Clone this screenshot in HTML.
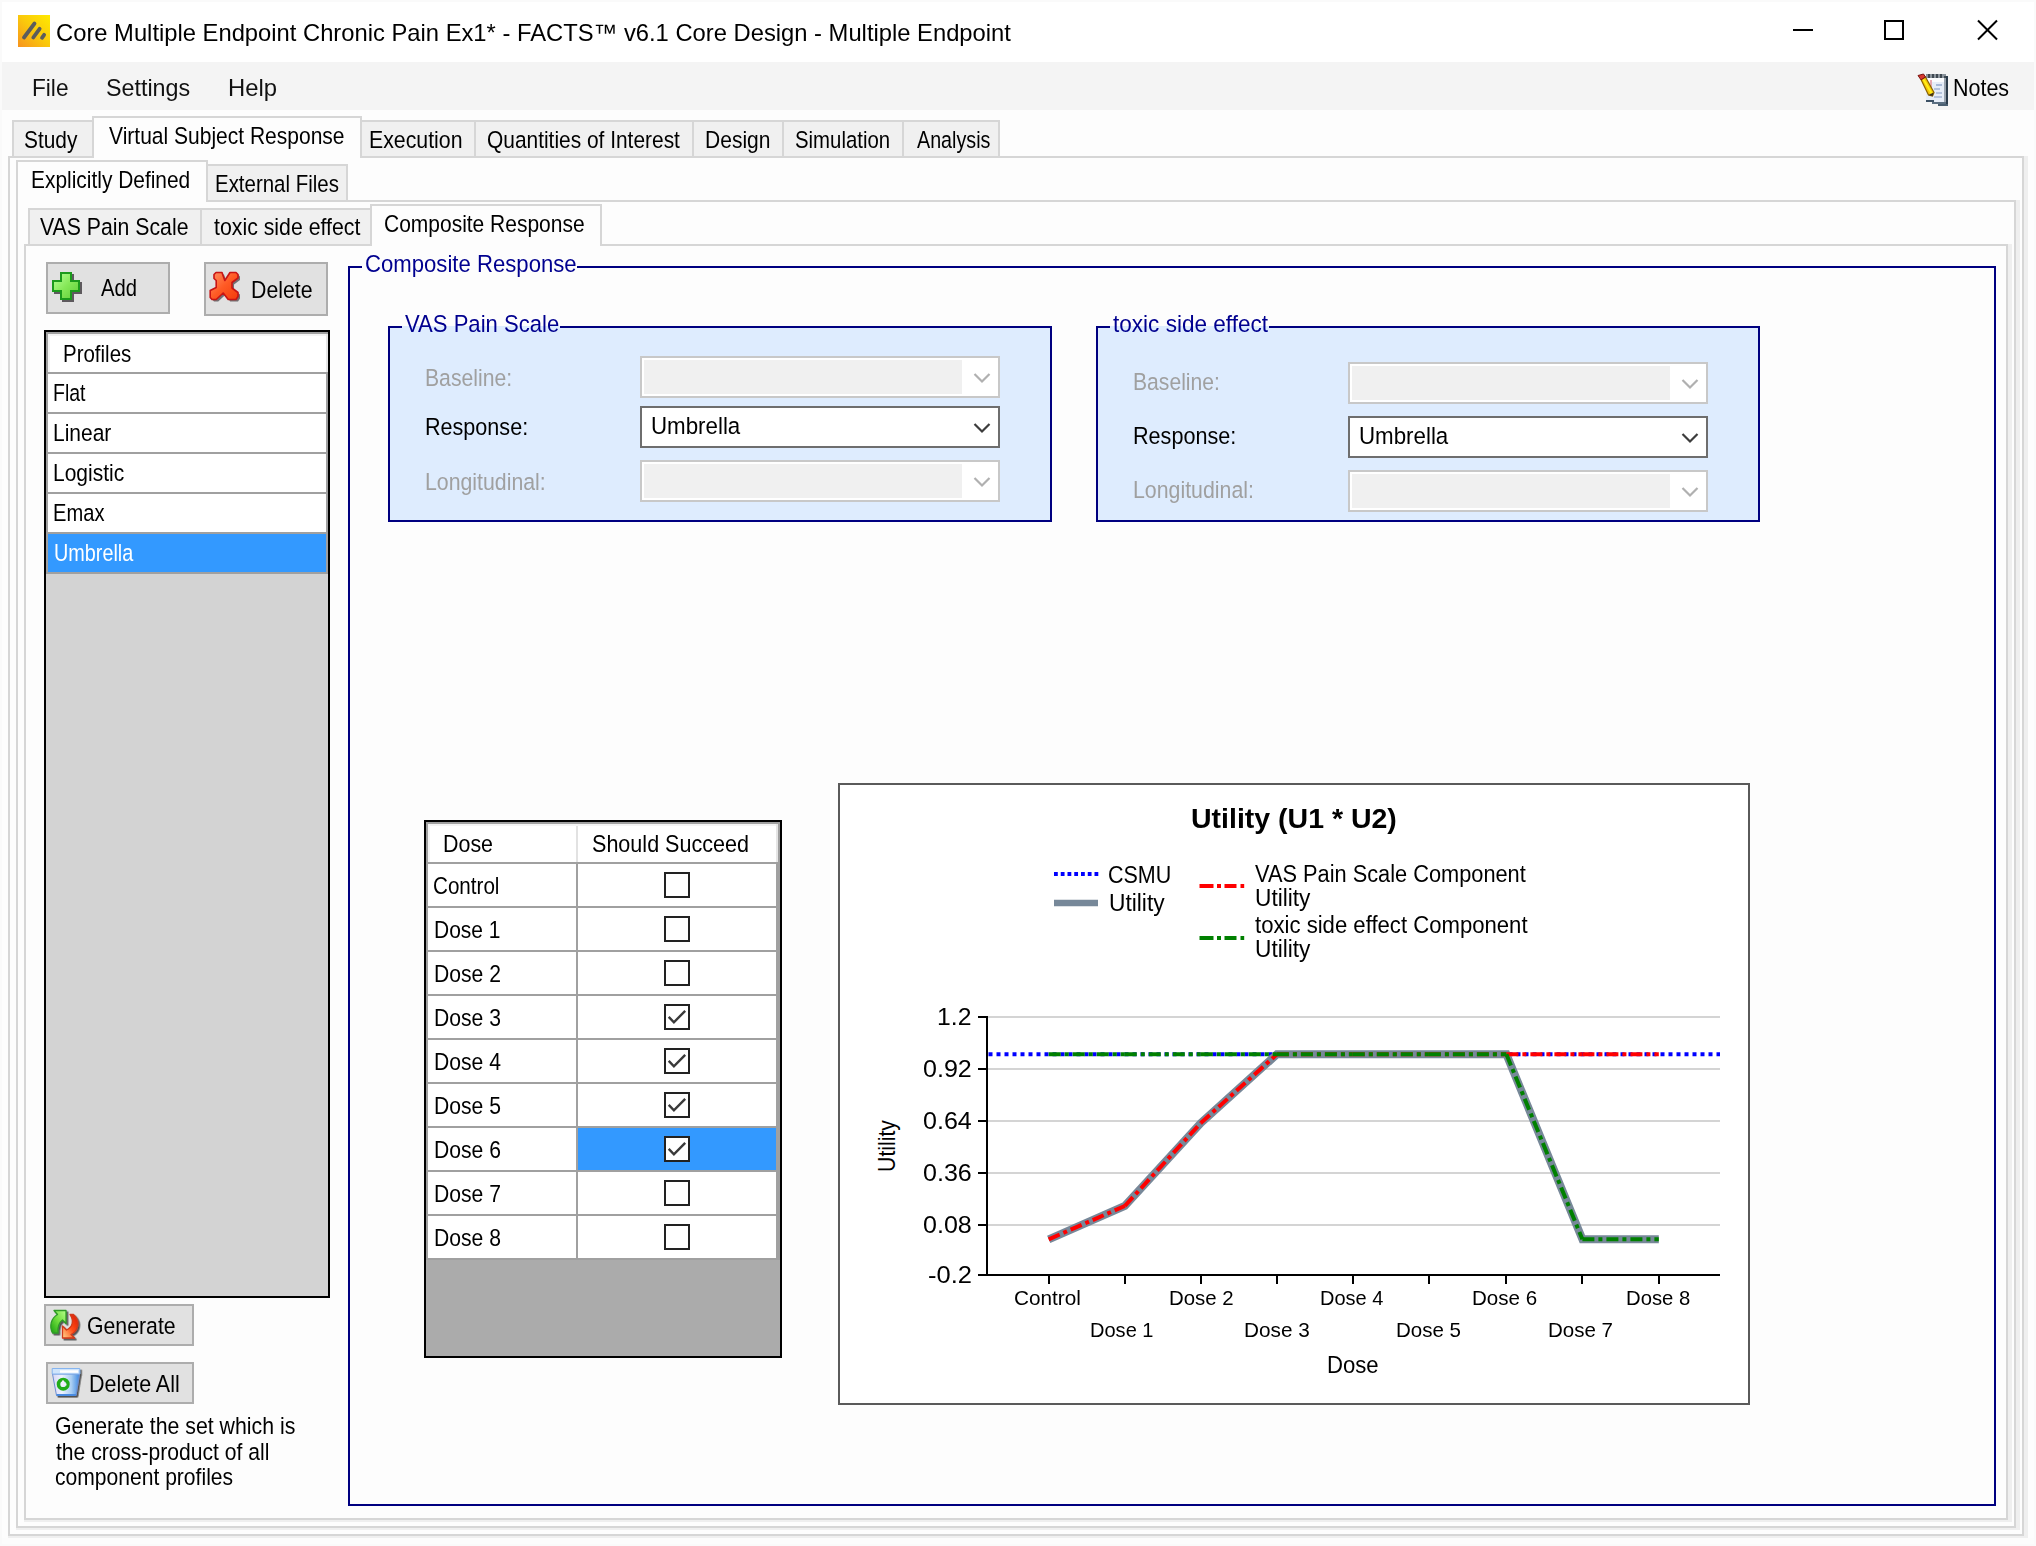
<!DOCTYPE html>
<html><head><meta charset="utf-8"><title>FACTS Core Design</title><style>
html,body{margin:0;padding:0;}
body{width:2036px;height:1546px;position:relative;overflow:hidden;background:#fff;font-family:"Liberation Sans", sans-serif;}
.b{position:absolute;box-sizing:border-box;}
.t{position:absolute;white-space:nowrap;transform-origin:0 0;display:block;}
svg.ov{position:absolute;left:0;top:0;}
</style></head>
<body>
<div class="b" style="left:0px;top:0px;width:2036px;height:2px;background:#fafafa;"></div>
<div class="b" style="left:0px;top:0px;width:2px;height:1546px;background:#fafafa;"></div>
<div class="b" style="left:2034px;top:0px;width:2px;height:1546px;background:#fafafa;"></div>
<div class="b" style="left:0px;top:1544px;width:2036px;height:2px;background:#fafafa;"></div>
<div class="b" style="left:2px;top:1538px;width:2032px;height:6px;background:#fcfcfc;"></div>
<div class="b" style="left:2px;top:62px;width:2032px;height:48px;background:#f4f4f4;"></div>
<div class="b" style="left:2px;top:110px;width:2032px;height:1428px;background:#fdfdfd;"></div>
<div class="b" style="left:2024px;top:156px;width:4px;height:1382px;background:#efefef;"></div>
<div class="b" style="left:8px;top:1536px;width:2020px;height:2px;background:#efefef;"></div>
<div class="b" style="left:8px;top:156px;width:2016px;height:1380px;background:#fdfdfd;border:2px solid #d6d6d6;"></div>
<div class="b" style="left:12px;top:120px;width:80px;height:36px;background:#f0f0f0;border-top:2px solid #d6d6d6;border-left:2px solid #d6d6d6;"></div>
<div class="b" style="left:362px;top:120px;width:114px;height:36px;background:#f0f0f0;border-top:2px solid #d6d6d6;border-right:2px solid #d6d6d6;"></div>
<div class="b" style="left:476px;top:120px;width:218px;height:36px;background:#f0f0f0;border-top:2px solid #d6d6d6;border-right:2px solid #d6d6d6;"></div>
<div class="b" style="left:694px;top:120px;width:90px;height:36px;background:#f0f0f0;border-top:2px solid #d6d6d6;border-right:2px solid #d6d6d6;"></div>
<div class="b" style="left:784px;top:120px;width:120px;height:36px;background:#f0f0f0;border-top:2px solid #d6d6d6;border-right:2px solid #d6d6d6;"></div>
<div class="b" style="left:904px;top:120px;width:96px;height:36px;background:#f0f0f0;border-top:2px solid #d6d6d6;border-right:2px solid #d6d6d6;"></div>
<div class="b" style="left:92px;top:116px;width:270px;height:42px;background:#fdfdfd;border-top:2px solid #d6d6d6;border-left:2px solid #d6d6d6;border-right:2px solid #d6d6d6;"></div>
<div class="b" style="left:2016px;top:200px;width:4px;height:1330px;background:#efefef;"></div>
<div class="b" style="left:16px;top:1528px;width:2004px;height:2px;background:#efefef;"></div>
<div class="b" style="left:16px;top:200px;width:2000px;height:1328px;background:#fdfdfd;border:2px solid #d6d6d6;"></div>
<div class="b" style="left:208px;top:164px;width:140px;height:36px;background:#f0f0f0;border-top:2px solid #d6d6d6;border-right:2px solid #d6d6d6;"></div>
<div class="b" style="left:16px;top:160px;width:192px;height:42px;background:#fdfdfd;border-top:2px solid #d6d6d6;border-left:2px solid #d6d6d6;border-right:2px solid #d6d6d6;"></div>
<div class="b" style="left:2008px;top:244px;width:4px;height:1278px;background:#efefef;"></div>
<div class="b" style="left:24px;top:1520px;width:1988px;height:2px;background:#efefef;"></div>
<div class="b" style="left:24px;top:244px;width:1984px;height:1276px;background:#fdfdfd;border:2px solid #d6d6d6;"></div>
<div class="b" style="left:28px;top:208px;width:174px;height:36px;background:#f0f0f0;border-top:2px solid #d6d6d6;border-left:2px solid #d6d6d6;border-right:2px solid #d6d6d6;"></div>
<div class="b" style="left:202px;top:208px;width:168px;height:36px;background:#f0f0f0;border-top:2px solid #d6d6d6;"></div>
<div class="b" style="left:370px;top:204px;width:232px;height:42px;background:#fdfdfd;border-top:2px solid #d6d6d6;border-left:2px solid #d6d6d6;border-right:2px solid #d6d6d6;"></div>
<div class="b" style="left:46px;top:262px;width:124px;height:52px;background:#e1e1e1;border:2px solid #adadad;"></div>
<div class="b" style="left:204px;top:262px;width:124px;height:54px;background:#e1e1e1;border:2px solid #adadad;"></div>
<div class="b" style="left:44px;top:330px;width:286px;height:968px;background:#d3d3d3;border:2px solid #000;"></div>
<div class="b" style="left:46px;top:332px;width:282px;height:2px;background:#a0a0a0;"></div>
<div class="b" style="left:46px;top:332px;width:2px;height:242px;background:#a0a0a0;"></div>
<div class="b" style="left:48px;top:334px;width:278px;height:38px;background:#fff;border-top:2px solid #f3f3f3;border-left:2px solid #f3f3f3;"></div>
<div class="b" style="left:326px;top:334px;width:2px;height:38px;background:#e5e5e5;"></div>
<div class="b" style="left:326px;top:372px;width:2px;height:202px;background:#a0a0a0;"></div>
<div class="b" style="left:48px;top:372px;width:278px;height:2px;background:#a0a0a0;"></div>
<div class="b" style="left:48px;top:374px;width:278px;height:38px;background:#fff;"></div>
<div class="b" style="left:48px;top:412px;width:278px;height:2px;background:#a0a0a0;"></div>
<div class="b" style="left:48px;top:414px;width:278px;height:38px;background:#fff;"></div>
<div class="b" style="left:48px;top:452px;width:278px;height:2px;background:#a0a0a0;"></div>
<div class="b" style="left:48px;top:454px;width:278px;height:38px;background:#fff;"></div>
<div class="b" style="left:48px;top:492px;width:278px;height:2px;background:#a0a0a0;"></div>
<div class="b" style="left:48px;top:494px;width:278px;height:38px;background:#fff;"></div>
<div class="b" style="left:48px;top:532px;width:278px;height:2px;background:#a0a0a0;"></div>
<div class="b" style="left:48px;top:534px;width:278px;height:38px;background:#3399ff;"></div>
<div class="b" style="left:48px;top:572px;width:278px;height:2px;background:#a0a0a0;"></div>
<div class="b" style="left:44px;top:1304px;width:150px;height:42px;background:#e1e1e1;border:2px solid #adadad;"></div>
<div class="b" style="left:46px;top:1362px;width:148px;height:42px;background:#e1e1e1;border:2px solid #adadad;"></div>
<div class="b" style="left:348px;top:266px;width:13.600000000000023px;height:2px;background:#000080;"></div>
<div class="b" style="left:577px;top:266px;width:1419px;height:2px;background:#000080;"></div>
<div class="b" style="left:348px;top:266px;width:2px;height:1240px;background:#000080;"></div>
<div class="b" style="left:1994px;top:266px;width:2px;height:1240px;background:#000080;"></div>
<div class="b" style="left:348px;top:1504px;width:1648px;height:2px;background:#000080;"></div>
<div class="b" style="left:388px;top:326px;width:664px;height:196px;background:#deecfe;"></div>
<div class="b" style="left:388px;top:326px;width:13.600000000000023px;height:2px;background:#000080;"></div>
<div class="b" style="left:560px;top:326px;width:492px;height:2px;background:#000080;"></div>
<div class="b" style="left:388px;top:326px;width:2px;height:196px;background:#000080;"></div>
<div class="b" style="left:1050px;top:326px;width:2px;height:196px;background:#000080;"></div>
<div class="b" style="left:388px;top:520px;width:664px;height:2px;background:#000080;"></div>
<div class="b" style="left:1096px;top:326px;width:664px;height:196px;background:#deecfe;"></div>
<div class="b" style="left:1096px;top:326px;width:13.5px;height:2px;background:#000080;"></div>
<div class="b" style="left:1269px;top:326px;width:491px;height:2px;background:#000080;"></div>
<div class="b" style="left:1096px;top:326px;width:2px;height:196px;background:#000080;"></div>
<div class="b" style="left:1758px;top:326px;width:2px;height:196px;background:#000080;"></div>
<div class="b" style="left:1096px;top:520px;width:664px;height:2px;background:#000080;"></div>
<div class="b" style="left:640px;top:356px;width:360px;height:42px;background:#fff;border:2px solid #c8c8c8;"></div>
<div class="b" style="left:644px;top:360px;width:318px;height:34px;background:#f0f0f0;"></div>
<div class="b" style="left:640px;top:406px;width:360px;height:42px;background:#fff;border:2px solid #6e6e6e;"></div>
<div class="b" style="left:640px;top:460px;width:360px;height:42px;background:#fff;border:2px solid #c8c8c8;"></div>
<div class="b" style="left:644px;top:464px;width:318px;height:34px;background:#f0f0f0;"></div>
<div class="b" style="left:1348px;top:362px;width:360px;height:42px;background:#fff;border:2px solid #c8c8c8;"></div>
<div class="b" style="left:1352px;top:366px;width:318px;height:34px;background:#f0f0f0;"></div>
<div class="b" style="left:1348px;top:416px;width:360px;height:42px;background:#fff;border:2px solid #6e6e6e;"></div>
<div class="b" style="left:1348px;top:470px;width:360px;height:42px;background:#fff;border:2px solid #c8c8c8;"></div>
<div class="b" style="left:1352px;top:474px;width:318px;height:34px;background:#f0f0f0;"></div>
<div class="b" style="left:424px;top:820px;width:358px;height:538px;background:#ababab;border:2px solid #000;"></div>
<div class="b" style="left:426px;top:822px;width:354px;height:2px;background:#a0a0a0;"></div>
<div class="b" style="left:426px;top:822px;width:2px;height:438px;background:#a0a0a0;"></div>
<div class="b" style="left:778px;top:822px;width:2px;height:438px;background:#a0a0a0;"></div>
<div class="b" style="left:428px;top:824px;width:348px;height:38px;background:#fff;border-top:2px solid #f3f3f3;border-left:2px solid #f3f3f3;"></div>
<div class="b" style="left:576px;top:826px;width:2px;height:36px;background:#e2e2e2;"></div>
<div class="b" style="left:776px;top:824px;width:2px;height:38px;background:#e5e5e5;"></div>
<div class="b" style="left:428px;top:862px;width:350px;height:2px;background:#a0a0a0;"></div>
<div class="b" style="left:428px;top:864px;width:148px;height:42px;background:#fff;"></div>
<div class="b" style="left:578px;top:864px;width:198px;height:42px;background:#fff;"></div>
<div class="b" style="left:428px;top:906px;width:350px;height:2px;background:#a0a0a0;"></div>
<div class="b" style="left:664px;top:872px;width:26px;height:26px;background:#fff;border:2px solid #222;"></div>
<div class="b" style="left:428px;top:908px;width:148px;height:42px;background:#fff;"></div>
<div class="b" style="left:578px;top:908px;width:198px;height:42px;background:#fff;"></div>
<div class="b" style="left:428px;top:950px;width:350px;height:2px;background:#a0a0a0;"></div>
<div class="b" style="left:664px;top:916px;width:26px;height:26px;background:#fff;border:2px solid #222;"></div>
<div class="b" style="left:428px;top:952px;width:148px;height:42px;background:#fff;"></div>
<div class="b" style="left:578px;top:952px;width:198px;height:42px;background:#fff;"></div>
<div class="b" style="left:428px;top:994px;width:350px;height:2px;background:#a0a0a0;"></div>
<div class="b" style="left:664px;top:960px;width:26px;height:26px;background:#fff;border:2px solid #222;"></div>
<div class="b" style="left:428px;top:996px;width:148px;height:42px;background:#fff;"></div>
<div class="b" style="left:578px;top:996px;width:198px;height:42px;background:#fff;"></div>
<div class="b" style="left:428px;top:1038px;width:350px;height:2px;background:#a0a0a0;"></div>
<div class="b" style="left:664px;top:1004px;width:26px;height:26px;background:#fff;border:2px solid #222;"></div>
<div class="b" style="left:428px;top:1040px;width:148px;height:42px;background:#fff;"></div>
<div class="b" style="left:578px;top:1040px;width:198px;height:42px;background:#fff;"></div>
<div class="b" style="left:428px;top:1082px;width:350px;height:2px;background:#a0a0a0;"></div>
<div class="b" style="left:664px;top:1048px;width:26px;height:26px;background:#fff;border:2px solid #222;"></div>
<div class="b" style="left:428px;top:1084px;width:148px;height:42px;background:#fff;"></div>
<div class="b" style="left:578px;top:1084px;width:198px;height:42px;background:#fff;"></div>
<div class="b" style="left:428px;top:1126px;width:350px;height:2px;background:#a0a0a0;"></div>
<div class="b" style="left:664px;top:1092px;width:26px;height:26px;background:#fff;border:2px solid #222;"></div>
<div class="b" style="left:428px;top:1128px;width:148px;height:42px;background:#fff;"></div>
<div class="b" style="left:578px;top:1128px;width:198px;height:42px;background:#3399ff;"></div>
<div class="b" style="left:428px;top:1170px;width:350px;height:2px;background:#a0a0a0;"></div>
<div class="b" style="left:664px;top:1136px;width:26px;height:26px;background:#fff;border:2px solid #222;"></div>
<div class="b" style="left:428px;top:1172px;width:148px;height:42px;background:#fff;"></div>
<div class="b" style="left:578px;top:1172px;width:198px;height:42px;background:#fff;"></div>
<div class="b" style="left:428px;top:1214px;width:350px;height:2px;background:#a0a0a0;"></div>
<div class="b" style="left:664px;top:1180px;width:26px;height:26px;background:#fff;border:2px solid #222;"></div>
<div class="b" style="left:428px;top:1216px;width:148px;height:42px;background:#fff;"></div>
<div class="b" style="left:578px;top:1216px;width:198px;height:42px;background:#fff;"></div>
<div class="b" style="left:428px;top:1258px;width:350px;height:2px;background:#a0a0a0;"></div>
<div class="b" style="left:664px;top:1224px;width:26px;height:26px;background:#fff;border:2px solid #222;"></div>
<div class="b" style="left:576px;top:864px;width:2px;height:396px;background:#a0a0a0;"></div>
<div class="b" style="left:776px;top:864px;width:2px;height:396px;background:#a0a0a0;"></div>
<div class="b" style="left:838px;top:783px;width:912px;height:622px;background:#fff;border:2px solid #5a5a5a;"></div>
<svg class="ov" width="2036" height="1546" viewBox="0 0 2036 1546">
<defs><linearGradient id="ig" x1="1" y1="0" x2="0" y2="1"><stop offset="0" stop-color="#ffea00"/><stop offset="0.5" stop-color="#fac80c"/><stop offset="1" stop-color="#f7931e"/></linearGradient>
<filter id="ds" x="-30%" y="-30%" width="170%" height="170%"><feDropShadow dx="1.6" dy="1.6" stdDeviation="0.7" flood-color="#222" flood-opacity="0.75"/></filter></defs>
<rect x="18" y="15" width="32" height="32" fill="url(#ig)"/>
<g stroke="#5c5c5c" stroke-width="3.800" stroke-linecap="round"><line x1="24" y1="37.500" x2="34.500" y2="23.500"/><line x1="33.300" y1="37.500" x2="39.600" y2="28.800"/><line x1="42" y1="37.800" x2="44.100" y2="34.800"/></g>
<g stroke="#000" stroke-width="2" fill="none" shape-rendering="crispEdges"><line x1="1793" y1="30" x2="1813" y2="30"/><rect x="1885" y="21" width="18" height="18"/></g>
<g stroke="#000" stroke-width="2" fill="none"><line x1="1978" y1="20.5" x2="1997" y2="39.5"/><line x1="1997" y1="20.5" x2="1978" y2="39.5"/></g>
<g shape-rendering="crispEdges">
<rect x="1926" y="76" width="18" height="26" fill="#e6edf8"/>
<rect x="1928" y="78" width="16" height="4" fill="#fbfcfe"/>
<rect x="1926" y="74" width="20" height="4" fill="#8b949c"/>
<rect x="1928" y="74" width="2" height="4" fill="#3f4952"/><rect x="1932" y="74" width="2" height="4" fill="#3f4952"/><rect x="1936" y="74" width="2" height="4" fill="#3f4952"/><rect x="1940" y="74" width="2" height="4" fill="#3f4952"/><rect x="1944" y="76" width="2" height="2" fill="#3f4952"/>
<rect x="1944" y="78" width="2" height="26" fill="#98a2ad"/>
<rect x="1946" y="76" width="2" height="28" fill="#2b3b4b"/>
<rect x="1926" y="100" width="8" height="2" fill="#3c5064"/>
<rect x="1932" y="102" width="14" height="2" fill="#5a6e80"/>
<rect x="1938" y="104" width="10" height="2" fill="#4a5e70"/>
<rect x="1930" y="80" width="2" height="8" fill="#e8a8b0"/>
<rect x="1936" y="84" width="6" height="2" fill="#a9bad8"/><rect x="1934" y="88" width="6" height="2" fill="#b4c2dc"/><rect x="1936" y="92" width="6" height="2" fill="#b4c2dc"/><rect x="1934" y="96" width="8" height="2" fill="#b4c2dc"/>
</g>
<path d="M1921 79.500 L1925.500 77 L1934 92.500 L1932.500 96 L1928.500 95 Z" fill="#f6c80a" stroke="#8a6200" stroke-width="1.2"/>
<path d="M1923.500 79.500 L1932 94" stroke="#fff21a" stroke-width="1.6"/>
<path d="M1918 75.500 L1923.500 74 L1925.500 77 L1921 79.800 Z" fill="#d83a30" stroke="#7a1410" stroke-width="1"/>
<path d="M1928.500 95 L1932.500 96 L1933.500 92.500 Z" fill="#3a3020"/>
<defs><linearGradient id="gp" x1="0" y1="0" x2="1" y2="1"><stop offset="0" stop-color="#b4ff96"/><stop offset="0.5" stop-color="#86e858"/><stop offset="1" stop-color="#5fcf38"/></linearGradient>
<linearGradient id="rx" x1="0" y1="0" x2="1" y2="1"><stop offset="0" stop-color="#ff9266"/><stop offset="0.5" stop-color="#ff5a24"/><stop offset="1" stop-color="#f23c0c"/></linearGradient></defs>
<path d="M60 272 h12 v8 h8 v12 h-8 v8 h-12 v-8 h-8 v-12 h8 Z" fill="#5e5a5e" transform="translate(2,2)"/>
<path d="M60 272 h12 v8 h8 v12 h-8 v8 h-12 v-8 h-8 v-12 h8 Z" fill="#1c9a1c"/>
<path d="M62 274 h8 v8 h8 v8 h-8 v8 h-8 v-8 h-8 v-8 h8 Z" fill="url(#gp)"/>
<path d="M216 272.500 L222 272.500 L224.800 280.500 L230 272.500 L236 272.500 L238 274.500 L238 278 L232 282.500 L232 288 L238 292.500 L238 296.500 L236 299.500 L228.200 299.500 L223.200 293 L216.200 299.500 L212 299.500 L210.200 297.500 L210.200 290.500 L216.200 287.500 L216.200 280.500 L214 278.500 L214 274.500 Z" fill="#5e5a5e" opacity="0.85" transform="translate(2,2)"/>
<path d="M216 272.500 L222 272.500 L224.800 280.500 L230 272.500 L236 272.500 L238 274.500 L238 278 L232 282.500 L232 288 L238 292.500 L238 296.500 L236 299.500 L228.200 299.500 L223.200 293 L216.200 299.500 L212 299.500 L210.200 297.500 L210.200 290.500 L216.200 287.500 L216.200 280.500 L214 278.500 L214 274.500 Z" fill="url(#rx)" stroke="#c81414" stroke-width="1.6" stroke-linejoin="round"/>
<defs><linearGradient id="ga" x1="1" y1="0" x2="0" y2="1"><stop offset="0" stop-color="#b6ff8a"/><stop offset="0.5" stop-color="#6fdc3c"/><stop offset="1" stop-color="#18a010"/></linearGradient>
<linearGradient id="ra" x1="1" y1="0" x2="0" y2="1"><stop offset="0" stop-color="#d81808"/><stop offset="0.5" stop-color="#ff4a14"/><stop offset="1" stop-color="#ffd890"/></linearGradient></defs>
<g filter="url(#ds)">
<path d="M54 1310.500 H66 V1323.500 L62.500 1320 C59 1322.500 57.500 1327 58 1333 L52.500 1333 C49 1326 51 1318.500 57.500 1314.500 Z" fill="url(#ga)" stroke="#2f9a28" stroke-width="1.3" stroke-linejoin="round"/>
<path d="M62.500 1326 V1338 H74.500 L71 1334.500 C78 1331 81 1321.500 73.500 1314.500 L70 1314.500 C74 1320.500 73 1327 66.500 1330 Z" fill="url(#ra)" stroke="#d23a1a" stroke-width="1.3" stroke-linejoin="round"/>
</g>
<defs><linearGradient id="bin" x1="0" y1="0" x2="1" y2="0"><stop offset="0" stop-color="#d6d6f4"/><stop offset="0.35" stop-color="#eef2ff"/><stop offset="0.7" stop-color="#a8cdf2"/><stop offset="1" stop-color="#3c88e2"/></linearGradient></defs>
<g filter="url(#ds)">
<path d="M52.500 1374 L79.500 1374 L76 1395.500 L56.500 1395.500 Z" fill="url(#bin)" stroke="#6f8fd0" stroke-width="1"/>
<path d="M56.500 1394 L76 1394 L75.800 1396 L56.700 1396 Z" fill="#4a8ae0"/>
<path d="M52.200 1368.500 L79.800 1368.500 L79.800 1374 L52.200 1374 Z" fill="#cfe4fb" stroke="#86b4ee" stroke-width="1"/>
<path d="M60 1371.500 L78 1371.500" stroke="#ffffff" stroke-width="2.400"/>
</g>
<circle cx="63.200" cy="1384.200" r="4.700" fill="none" stroke="#22ac18" stroke-width="3.600"/>
<path d="M63 1380.500 L63 1384.500 L66.500 1384.500" fill="none" stroke="#f4eefc" stroke-width="2"/>
<path d="M974.5 374 L982 381.5 L989.5 374" fill="none" stroke="#b0b0b0" stroke-width="2.200"/>
<path d="M974.5 424 L982 431.5 L989.5 424" fill="none" stroke="#3c3c3c" stroke-width="2.200"/>
<path d="M974.5 478 L982 485.5 L989.5 478" fill="none" stroke="#b0b0b0" stroke-width="2.200"/>
<path d="M1682.5 380 L1690 387.5 L1697.5 380" fill="none" stroke="#b0b0b0" stroke-width="2.200"/>
<path d="M1682.5 434 L1690 441.5 L1697.5 434" fill="none" stroke="#3c3c3c" stroke-width="2.200"/>
<path d="M1682.5 488 L1690 495.5 L1697.5 488" fill="none" stroke="#b0b0b0" stroke-width="2.200"/>
<path d="M668.700 1016.9 L673.900 1022.3 L685.200 1010.8" fill="none" stroke="#3a3a3a" stroke-width="2.400"/>
<path d="M668.700 1060.9 L673.900 1066.3 L685.200 1054.8" fill="none" stroke="#3a3a3a" stroke-width="2.400"/>
<path d="M668.700 1104.9 L673.900 1110.3 L685.200 1098.8" fill="none" stroke="#3a3a3a" stroke-width="2.400"/>
<path d="M668.700 1148.9 L673.900 1154.3 L685.200 1142.8" fill="none" stroke="#3a3a3a" stroke-width="2.400"/>
<g shape-rendering="crispEdges">
<rect x="988" y="1016" width="732" height="2" fill="#d4d4d4"/>
<rect x="988" y="1068" width="732" height="2" fill="#d4d4d4"/>
<rect x="988" y="1120" width="732" height="2" fill="#d4d4d4"/>
<rect x="988" y="1172" width="732" height="2" fill="#d4d4d4"/>
<rect x="988" y="1224" width="732" height="2" fill="#d4d4d4"/>
</g>
<line x1="1054" y1="874" x2="1098.300" y2="874" stroke="#0000ff" stroke-width="4" stroke-dasharray="3.800 2.950"/>
<line x1="1054" y1="903" x2="1098" y2="903" stroke="#778899" stroke-width="6.400"/>
<line x1="1199.500" y1="886" x2="1244.200" y2="886" stroke="#ff0000" stroke-width="4" stroke-dasharray="14 3.500 4 3.500 12 4 4 4"/>
<line x1="1199.500" y1="938" x2="1244.200" y2="938" stroke="#008000" stroke-width="4" stroke-dasharray="14 3.500 4 3.500 12 4 4 4"/>
<line x1="988.500" y1="1054.3" x2="1720" y2="1054.3" stroke="#0000ff" stroke-width="4" stroke-dasharray="4 4"/>
<polyline points="1048.7,1239.3 1124.8,1206 1200.8,1123 1276.9,1054.3 1352.8,1054.3 1428.9,1054.3 1506.4,1054.3 1582.4,1239.3 1658.8,1239.3" fill="none" stroke="#778899" stroke-width="8" stroke-linejoin="miter"/>
<g stroke="#ff0000" stroke-width="4" stroke-dasharray="12 4 4 4" fill="none"><line x1="1048.7" y1="1239.3" x2="1124.8" y2="1206"/><line x1="1124.8" y1="1206" x2="1200.8" y2="1123"/><line x1="1200.8" y1="1123" x2="1276.9" y2="1054.3"/><line x1="1276.9" y1="1054.3" x2="1352.8" y2="1054.3"/><line x1="1352.8" y1="1054.3" x2="1428.9" y2="1054.3"/><line x1="1428.9" y1="1054.3" x2="1506.4" y2="1054.3"/><line x1="1506.4" y1="1054.3" x2="1582.4" y2="1054.3"/><line x1="1582.4" y1="1054.3" x2="1658.8" y2="1054.3"/></g>
<g stroke="#008000" stroke-width="4" stroke-dasharray="12 4 4 4" fill="none"><line x1="1048.7" y1="1054.3" x2="1124.8" y2="1054.3"/><line x1="1124.8" y1="1054.3" x2="1200.8" y2="1054.3"/><line x1="1200.8" y1="1054.3" x2="1276.9" y2="1054.3"/><line x1="1276.9" y1="1054.3" x2="1352.8" y2="1054.3"/><line x1="1352.8" y1="1054.3" x2="1428.9" y2="1054.3"/><line x1="1428.9" y1="1054.3" x2="1506.4" y2="1054.3"/><line x1="1506.4" y1="1054.3" x2="1582.4" y2="1239.3"/><line x1="1582.4" y1="1239.3" x2="1658.8" y2="1239.3"/></g>
<g shape-rendering="crispEdges" fill="#000">
<rect x="986" y="1016" width="2" height="260"/>
<rect x="986" y="1274" width="734" height="2"/>
<rect x="978" y="1016" width="9" height="2"/>
<rect x="978" y="1068" width="9" height="2"/>
<rect x="978" y="1120" width="9" height="2"/>
<rect x="978" y="1172" width="9" height="2"/>
<rect x="978" y="1224" width="9" height="2"/>
<rect x="978" y="1274" width="9" height="2"/>
<rect x="1048" y="1275" width="2" height="9"/>
<rect x="1124" y="1275" width="2" height="9"/>
<rect x="1200" y="1275" width="2" height="9"/>
<rect x="1276" y="1275" width="2" height="9"/>
<rect x="1352" y="1275" width="2" height="9"/>
<rect x="1428" y="1275" width="2" height="9"/>
<rect x="1505" y="1275" width="2" height="9"/>
<rect x="1581" y="1275" width="2" height="9"/>
<rect x="1658" y="1275" width="2" height="9"/>
</g>
</svg>
<span class="t" style="left:23.65px;top:127.80px;font-size:24.5px;line-height:24.5px;color:#000;transform:scaleX(0.8526);">Study</span>
<span class="t" style="left:109.10px;top:123.70px;font-size:24.5px;line-height:24.5px;color:#000;transform:scaleX(0.8576);">Virtual Subject Response</span>
<span class="t" style="left:368.76px;top:127.80px;font-size:24.5px;line-height:24.5px;color:#000;transform:scaleX(0.8688);">Execution</span>
<span class="t" style="left:486.65px;top:127.80px;font-size:24.5px;line-height:24.5px;color:#000;transform:scaleX(0.8533);">Quantities of Interest</span>
<span class="t" style="left:704.78px;top:127.80px;font-size:24.5px;line-height:24.5px;color:#000;transform:scaleX(0.8583);">Design</span>
<span class="t" style="left:795.17px;top:127.80px;font-size:24.5px;line-height:24.5px;color:#000;transform:scaleX(0.8309);">Simulation</span>
<span class="t" style="left:916.50px;top:127.80px;font-size:24.5px;line-height:24.5px;color:#000;transform:scaleX(0.8046);">Analysis</span>
<span class="t" style="left:31.19px;top:167.50px;font-size:24.5px;line-height:24.5px;color:#000;transform:scaleX(0.8536);">Explicitly Defined</span>
<span class="t" style="left:214.93px;top:171.50px;font-size:24.5px;line-height:24.5px;color:#000;transform:scaleX(0.8347);">External Files</span>
<span class="t" style="left:40.40px;top:215.30px;font-size:24.5px;line-height:24.5px;color:#000;transform:scaleX(0.8674);">VAS Pain Scale</span>
<span class="t" style="left:213.70px;top:215.30px;font-size:24.5px;line-height:24.5px;color:#000;transform:scaleX(0.8689);">toxic side effect</span>
<span class="t" style="left:384.34px;top:211.60px;font-size:24.5px;line-height:24.5px;color:#000;transform:scaleX(0.8564);">Composite Response</span>
<span class="t" style="left:55.51px;top:20.60px;font-size:24px;line-height:24px;color:#000;transform:scaleX(0.9901);">Core Multiple Endpoint Chronic Pain Ex1* - FACTS™ v6.1 Core Design - Multiple Endpoint</span>
<span class="t" style="left:31.96px;top:75.70px;font-size:24px;line-height:24px;color:#111;transform:scaleX(0.9431);">File</span>
<span class="t" style="left:105.53px;top:75.70px;font-size:24px;line-height:24px;color:#111;transform:scaleX(0.9706);">Settings</span>
<span class="t" style="left:228.01px;top:75.70px;font-size:24px;line-height:24px;color:#111;transform:scaleX(0.9935);">Help</span>
<span class="t" style="left:1953.25px;top:76.00px;font-size:24.5px;line-height:24.5px;color:#000;transform:scaleX(0.8761);">Notes</span>
<span class="t" style="left:100.90px;top:275.70px;font-size:24.5px;line-height:24.5px;color:#000;transform:scaleX(0.8262);">Add</span>
<span class="t" style="left:251.26px;top:277.50px;font-size:24.5px;line-height:24.5px;color:#000;transform:scaleX(0.8696);">Delete</span>
<span class="t" style="left:53.31px;top:381.30px;font-size:24.5px;line-height:24.5px;color:#000;transform:scaleX(0.7967);">Flat</span>
<span class="t" style="left:53.19px;top:421.30px;font-size:24.5px;line-height:24.5px;color:#000;transform:scaleX(0.8568);">Linear</span>
<span class="t" style="left:53.19px;top:461.30px;font-size:24.5px;line-height:24.5px;color:#000;transform:scaleX(0.8562);">Logistic</span>
<span class="t" style="left:53.26px;top:501.30px;font-size:24.5px;line-height:24.5px;color:#000;transform:scaleX(0.8215);">Emax</span>
<span class="t" style="left:54.09px;top:541.30px;font-size:24.5px;line-height:24.5px;color:#fff;transform:scaleX(0.8090);">Umbrella</span>
<span class="t" style="left:62.63px;top:341.60px;font-size:24.5px;line-height:24.5px;color:#000;transform:scaleX(0.8358);">Profiles</span>
<span class="t" style="left:87.33px;top:1313.80px;font-size:24.5px;line-height:24.5px;color:#000;transform:scaleX(0.8674);">Generate</span>
<span class="t" style="left:88.75px;top:1372.00px;font-size:24.5px;line-height:24.5px;color:#000;transform:scaleX(0.8766);">Delete All</span>
<span class="t" style="left:54.93px;top:1413.90px;font-size:24.5px;line-height:24.5px;color:#000;transform:scaleX(0.8695);">Generate the set which is</span>
<span class="t" style="left:55.80px;top:1439.70px;font-size:24.5px;line-height:24.5px;color:#000;transform:scaleX(0.8608);">the cross-product of all</span>
<span class="t" style="left:54.94px;top:1465.30px;font-size:24.5px;line-height:24.5px;color:#000;transform:scaleX(0.8602);">component profiles</span>
<span class="t" style="left:364.60px;top:252.20px;font-size:24.5px;line-height:24.5px;color:#00008f;transform:scaleX(0.9037);">Composite Response</span>
<span class="t" style="left:404.50px;top:311.80px;font-size:24.5px;line-height:24.5px;color:#00008f;transform:scaleX(0.9008);">VAS Pain Scale</span>
<span class="t" style="left:1112.70px;top:311.80px;font-size:24.5px;line-height:24.5px;color:#00008f;transform:scaleX(0.9205);">toxic side effect</span>
<span class="t" style="left:650.59px;top:413.80px;font-size:24.5px;line-height:24.5px;color:#000;transform:scaleX(0.9107);">Umbrella</span>
<span class="t" style="left:425.17px;top:365.50px;font-size:24.5px;line-height:24.5px;color:#a0a0a0;transform:scaleX(0.8641);">Baseline:</span>
<span class="t" style="left:425.14px;top:415.20px;font-size:24.5px;line-height:24.5px;color:#000;transform:scaleX(0.8807);">Response:</span>
<span class="t" style="left:425.16px;top:469.90px;font-size:24.5px;line-height:24.5px;color:#a0a0a0;transform:scaleX(0.8687);">Longitudinal:</span>
<span class="t" style="left:1358.59px;top:423.80px;font-size:24.5px;line-height:24.5px;color:#000;transform:scaleX(0.9107);">Umbrella</span>
<span class="t" style="left:1133.08px;top:369.70px;font-size:24.5px;line-height:24.5px;color:#a0a0a0;transform:scaleX(0.8620);">Baseline:</span>
<span class="t" style="left:1133.04px;top:423.80px;font-size:24.5px;line-height:24.5px;color:#000;transform:scaleX(0.8816);">Response:</span>
<span class="t" style="left:1133.06px;top:477.80px;font-size:24.5px;line-height:24.5px;color:#a0a0a0;transform:scaleX(0.8702);">Longitudinal:</span>
<span class="t" style="left:433.06px;top:874.00px;font-size:24.5px;line-height:24.5px;color:#000;transform:scaleX(0.8414);">Control</span>
<span class="t" style="left:433.79px;top:918.00px;font-size:24.5px;line-height:24.5px;color:#000;transform:scaleX(0.8560);">Dose 1</span>
<span class="t" style="left:433.77px;top:962.00px;font-size:24.5px;line-height:24.5px;color:#000;transform:scaleX(0.8626);">Dose 2</span>
<span class="t" style="left:433.77px;top:1006.00px;font-size:24.5px;line-height:24.5px;color:#000;transform:scaleX(0.8626);">Dose 3</span>
<span class="t" style="left:433.77px;top:1050.00px;font-size:24.5px;line-height:24.5px;color:#000;transform:scaleX(0.8626);">Dose 4</span>
<span class="t" style="left:433.77px;top:1094.00px;font-size:24.5px;line-height:24.5px;color:#000;transform:scaleX(0.8626);">Dose 5</span>
<span class="t" style="left:433.77px;top:1138.00px;font-size:24.5px;line-height:24.5px;color:#000;transform:scaleX(0.8626);">Dose 6</span>
<span class="t" style="left:433.77px;top:1182.00px;font-size:24.5px;line-height:24.5px;color:#000;transform:scaleX(0.8626);">Dose 7</span>
<span class="t" style="left:433.77px;top:1226.00px;font-size:24.5px;line-height:24.5px;color:#000;transform:scaleX(0.8626);">Dose 8</span>
<span class="t" style="left:443.05px;top:831.70px;font-size:24.5px;line-height:24.5px;color:#000;transform:scaleX(0.8741);">Dose</span>
<span class="t" style="left:591.82px;top:831.70px;font-size:24.5px;line-height:24.5px;color:#000;transform:scaleX(0.8800);">Should Succeed</span>
<span class="t" style="left:1190.66px;top:804.80px;font-size:27.5px;line-height:27.5px;color:#000;transform:scaleX(1.0362);font-weight:bold;">Utility (U1 * U2)</span>
<span class="t" style="left:1108.09px;top:864.20px;font-size:23.5px;line-height:23.5px;color:#000;transform:scaleX(0.9149);">CSMU</span>
<span class="t" style="left:1109.03px;top:892.30px;font-size:23.5px;line-height:23.5px;color:#000;transform:scaleX(0.9684);">Utility</span>
<span class="t" style="left:1255.10px;top:862.50px;font-size:23.5px;line-height:23.5px;color:#000;transform:scaleX(0.9267);">VAS Pain Scale Component</span>
<span class="t" style="left:1255.34px;top:886.60px;font-size:23.5px;line-height:23.5px;color:#000;transform:scaleX(0.9649);">Utility</span>
<span class="t" style="left:1255.10px;top:914.10px;font-size:23.5px;line-height:23.5px;color:#000;transform:scaleX(0.9413);">toxic side effect Component</span>
<span class="t" style="left:1255.34px;top:938.30px;font-size:23.5px;line-height:23.5px;color:#000;transform:scaleX(0.9649);">Utility</span>
<span class="t" style="left:937.47px;top:1005.30px;font-size:24px;line-height:24px;color:#000;transform:scaleX(1.0307);">1.2</span>
<span class="t" style="left:923.10px;top:1057.30px;font-size:24px;line-height:24px;color:#000;transform:scaleX(1.0439);">0.92</span>
<span class="t" style="left:923.10px;top:1109.30px;font-size:24px;line-height:24px;color:#000;transform:scaleX(1.0439);">0.64</span>
<span class="t" style="left:923.10px;top:1161.30px;font-size:24px;line-height:24px;color:#000;transform:scaleX(1.0439);">0.36</span>
<span class="t" style="left:923.10px;top:1213.30px;font-size:24px;line-height:24px;color:#000;transform:scaleX(1.0439);">0.08</span>
<span class="t" style="left:927.94px;top:1263.30px;font-size:24px;line-height:24px;color:#000;transform:scaleX(1.0623);">-0.2</span>
<span class="t" style="left:1014.21px;top:1287.30px;font-size:21px;line-height:21px;color:#000;transform:scaleX(0.9889);">Control</span>
<span class="t" style="left:1090.45px;top:1319.20px;font-size:21px;line-height:21px;color:#000;transform:scaleX(0.9544);">Dose 1</span>
<span class="t" style="left:1168.73px;top:1287.30px;font-size:21px;line-height:21px;color:#000;transform:scaleX(0.9729);">Dose 2</span>
<span class="t" style="left:1243.81px;top:1319.20px;font-size:21px;line-height:21px;color:#000;transform:scaleX(0.9883);">Dose 3</span>
<span class="t" style="left:1320.35px;top:1287.30px;font-size:21px;line-height:21px;color:#000;transform:scaleX(0.9520);">Dose 4</span>
<span class="t" style="left:1396.12px;top:1319.20px;font-size:21px;line-height:21px;color:#000;transform:scaleX(0.9775);">Dose 5</span>
<span class="t" style="left:1472.22px;top:1287.30px;font-size:21px;line-height:21px;color:#000;transform:scaleX(0.9791);">Dose 6</span>
<span class="t" style="left:1548.02px;top:1319.20px;font-size:21px;line-height:21px;color:#000;transform:scaleX(0.9775);">Dose 7</span>
<span class="t" style="left:1626.43px;top:1287.30px;font-size:21px;line-height:21px;color:#000;transform:scaleX(0.9652);">Dose 8</span>
<span class="t" style="left:1326.68px;top:1353.40px;font-size:24px;line-height:24px;color:#000;transform:scaleX(0.9217);">Dose</span>
<span class="t" style="left:895.00px;top:1170.60px;font-size:24px;line-height:24px;color:#000;transform:rotate(-90deg) scaleX(0.8827) translate(-1.00px,-20.00px);">Utility</span>
</body></html>
